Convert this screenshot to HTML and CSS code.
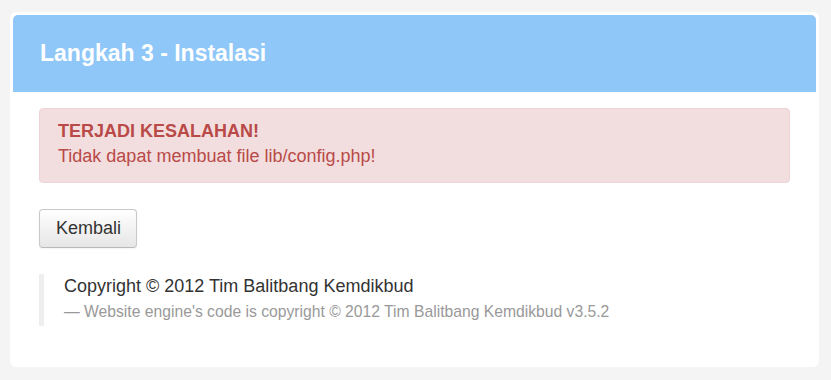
FILE: index.html
```html
<!DOCTYPE html>
<html lang="id">
<head>
<meta charset="utf-8">
<title>Langkah 3 - Instalasi</title>
<link rel="stylesheet" href="styles.css">
</head>
<body>
<div class="card">
  <div class="card-header">
    <h1 class="title">Langkah 3 - Instalasi</h1>
  </div>
  <div class="card-body">
    <div class="alert">
      <strong class="alert-heading">TERJADI KESALAHAN!</strong>
      <div>Tidak dapat membuat file lib/config.php!</div>
    </div>
    <div class="actions">
      <button class="btn" type="button">Kembali</button>
    </div>
    <blockquote class="credits">
      <p class="credits-main">Copyright © 2012 Tim Balitbang Kemdikbud</p>
      <small class="credits-sub">— Website engine's code is copyright © 2012 Tim Balitbang Kemdikbud v3.5.2</small>
    </blockquote>
  </div>
</div>
</body>
</html>
```

FILE: styles.css
```css
html, body {
  margin: 0;
  padding: 0;
}

body {
  background: #f4f4f4;
  font-family: "Liberation Sans", Arial, Helvetica, sans-serif;
  font-size: 18px;
  line-height: 25px;
  color: #333;
  padding: 12px 12px 0 10px;
}

.card {
  background: #fff;
  border-radius: 6px;
  padding: 3px;
}

.card-header {
  background: #8ec7f8;
  border-radius: 5px 5px 0 0;
  height: 77px;
  padding: 0 27px;
}

.title {
  margin: 0;
  font-size: 23px;
  line-height: 77px;
  font-weight: bold;
  color: #fff;
}

.card-body {
  padding: 16px 26px 38px;
}

.alert {
  background: #f2dede;
  border: 1px solid #eed3d7;
  border-radius: 4px;
  color: #b94a48;
  padding: 10px 18px 13px;
  margin-bottom: 26px;
}

.alert-heading {
  display: block;
  font-weight: bold;
}

.actions {
  margin-bottom: 26px;
  display: flex;
}

.btn {
  font-family: inherit;
  font-size: 18px;
  line-height: 25px;
  color: #333;
  padding: 6px 15px 6px 16px;
  border: 1px solid #c8c8c8;
  border-bottom-color: #b8b8b8;
  border-radius: 4px;
  background: linear-gradient(#ffffff, #e6e6e6);
  box-shadow: inset 0 1px 0 rgba(255,255,255,0.2), 0 1px 2px rgba(0,0,0,0.05);
}

.credits {
  margin: 0;
  border-left: 5px solid #eeeeee;
  padding: 0 0 2px 20px;
}

.credits-main {
  margin: 0;
  font-size: 18px;
  line-height: 25px;
  color: #333;
}

.credits-sub {
  display: block;
  font-size: 15.7px;
  line-height: 25px;
  color: #999;
}
```
